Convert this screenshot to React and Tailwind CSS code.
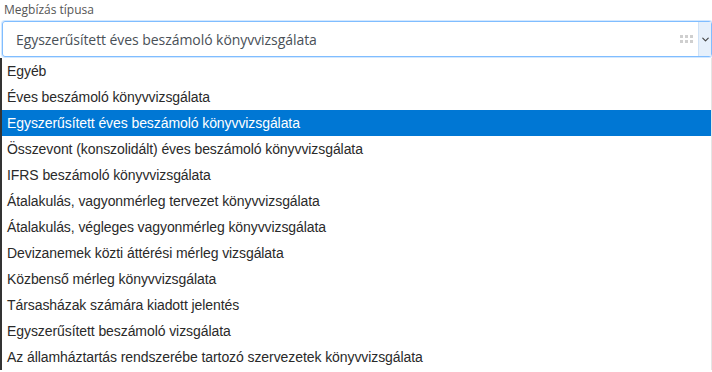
import { ChevronDown } from "lucide-react";

const options = [
  "Egyéb",
  "Éves beszámoló könyvvizsgálata",
  "Egyszerűsített éves beszámoló könyvvizsgálata",
  "Összevont (konszolidált) éves beszámoló könyvvizsgálata",
  "IFRS beszámoló könyvvizsgálata",
  "Átalakulás, vagyonmérleg tervezet könyvvizsgálata",
  "Átalakulás, végleges vagyonmérleg könyvvizsgálata",
  "Devizanemek közti áttérési mérleg vizsgálata",
  "Közbenső mérleg könyvvizsgálata",
  "Társasházak számára kiadott jelentés",
  "Egyszerűsített beszámoló vizsgálata",
  "Az államháztartás rendszerébe tartozó szervezetek könyvvizsgálata",
];

const selected = 2;

export default function App() {
  return (
    <div className="w-[712px] h-[372px] overflow-hidden bg-white font-['Open_Sans',sans-serif]">
      <div className="pl-[4px] pt-[1px] h-[21px] text-[12px] leading-[18px] text-[#555]">
        Megbízás típusa
      </div>
      <div className="ml-[2px] h-[36px] flex items-stretch border border-[#80bdff] rounded-[3px] shadow-[0_0_0_1px_rgba(128,189,255,0.35)]">
        <div className="flex-1 flex items-center pl-[13px] text-[14px] tracking-[-0.06px] text-[#495057]">
          Egyszerűsített éves beszámoló könyvvizsgálata
        </div>
        <div className="flex items-center pr-[4px]">
          <svg width="14" height="8" viewBox="0 0 14 8" fill="#cfcfcf">
            <rect x="0" y="0" width="3" height="3" />
            <rect x="5" y="0" width="3" height="3" />
            <rect x="10" y="0" width="3" height="3" />
            <rect x="0" y="5" width="3" height="3" />
            <rect x="5" y="5" width="3" height="3" />
            <rect x="10" y="5" width="3" height="3" />
          </svg>
        </div>
        <div className="w-[13px] flex items-center justify-center bg-[#e6f0fb] border-l border-[#cfe2f7]">
          <ChevronDown size={11} strokeWidth={2.5} className="text-[#444]" />
        </div>
      </div>
      <div className="mt-[1px] border-l-2 border-l-[#333] border-r border-r-[#e5e5e5] font-['Liberation_Sans',sans-serif]">
        {options.map((o, i) => (
          <div
            key={o}
            className={
              "h-[26px] flex items-center pl-[5px] text-[14px] tracking-[-0.08px] " +
              (i === selected ? "bg-[#0077d4] text-white" : "text-[#2a2a2a]")
            }
          >
            {o}
          </div>
        ))}
      </div>
    </div>
  );
}
